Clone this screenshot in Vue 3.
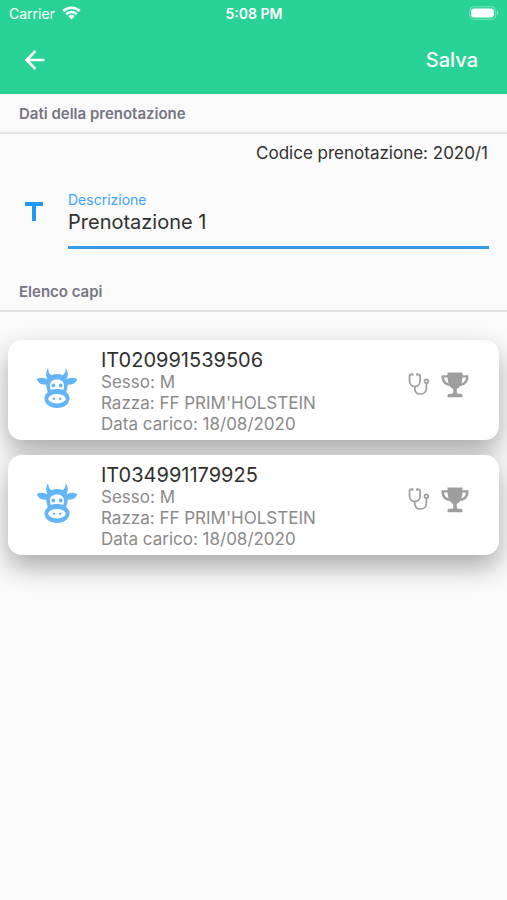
<template>
  <div class="page">
    <header class="app-bar">
      <div class="status-bar">
        <div class="carrier">
          <span>Carrier</span>
          <svg class="wifi" viewBox="0 0 20 15" aria-hidden="true">
            <g fill="none" stroke="#fff" stroke-width="2.8">
              <path d="M1.2 5.4a12.6 12.6 0 0 1 17.6 0" />
              <path d="M4.3 8.8a8.2 8.2 0 0 1 11.4 0" />
            </g>
            <path d="M10 14.5 6.6 11a5 5 0 0 1 6.8 0z" fill="#fff" />
          </svg>
        </div>
        <span class="time">5:08 PM</span>
        <svg class="battery" viewBox="0 0 30 14" aria-hidden="true">
          <rect x=".7" y=".7" width="26" height="12.6" rx="4" fill="none" stroke="#fff" stroke-opacity=".35" />
          <rect x="2.2" y="2.4" width="22.6" height="9.2" rx="2.4" fill="#fff" />
          <path d="M28 5v4c1.7-.6 1.7-3.4 0-4z" fill="#fff" fill-opacity=".5" />
        </svg>
      </div>
      <div class="toolbar">
        <button class="back" type="button" aria-label="Indietro">
          <svg viewBox="0 0 24 24" aria-hidden="true">
            <path d="M21.500 12H4M12.500 3 3.600 12l8.900 9" fill="none" stroke="#fff" stroke-width="2.6" />
          </svg>
        </button>
        <button class="save" type="button">Salva</button>
      </div>
    </header>

    <main>
      <h2 class="section-title">Dati della prenotazione</h2>
      <p class="code">Codice prenotazione: 2020/1</p>
      <div class="field">
        <svg class="field-icon" viewBox="0 0 18 20" aria-hidden="true">
          <path d="M0 0h18v4h-7v15H7V4H0z" fill="#2196f3" />
        </svg>
        <div class="field-body">
          <label for="descrizione">Descrizione</label>
          <input id="descrizione" v-model="descrizione" type="text" />
        </div>
      </div>

      <h2 class="section-title">Elenco capi</h2>
      <ul class="cards">
        <li v-for="capo in capi" :key="capo.matricola" class="card">
          <svg class="cow" viewBox="0 0 42 42" aria-hidden="true">
            <g fill="#64b5f6">
              <path d="M12.2 1c-2.600 4-2.800 9 .3 12l5.500-4.200c-4-.2-5.700-3.200-5.800-7.800z" />
              <path d="M29.800 1c2.600 4 2.800 9-.3 12L24 8.800c4-.2 5.700-3.200 5.800-7.800z" />
              <path d="M.8 12c4-2.200 9.200-1.800 12 1.800l-1 3.400C7 18.500 2.200 17 .8 12z" />
              <path d="M41.200 12c-4-2.200-9.200-1.800-12 1.800l1 3.400c4.800 1.300 9.600-.2 11-5.200z" />
              <path d="M21 7c-7 0-10.800 4-10.800 9.500 0 3.500.8 6 1.700 8.500-2 1.600-3.400 3.700-3.400 6.200C8.500 37 14 41 21 41s12.500-4 12.500-9.800c0-2.500-1.400-4.600-3.400-6.200.9-2.500 1.700-5 1.700-8.500C31.800 11 28 7 21 7z" />
            </g>
            <path d="M21 12.500c-4.600 0-7 2.300-7 6.300 0 1.500.3 2.900.8 4.200 1.800-.8 3.900-1.100 6.200-1.100s4.400.3 6.200 1.100c.5-1.300.8-2.700.8-4.200 0-4-2.400-6.300-7-6.300z" fill="#fff" />
            <ellipse cx="21" cy="31.7" rx="8.8" ry="4.7" fill="#fff" />
            <g fill="#64b5f6">
              <circle cx="17.3" cy="18.5" r="1.9" />
              <circle cx="24.7" cy="18.5" r="1.9" />
              <circle cx="17.8" cy="31.7" r="1.2" />
              <circle cx="24.2" cy="31.7" r="1.2" />
            </g>
          </svg>
          <div class="info">
            <h3>{{ capo.matricola }}</h3>
            <p>Sesso: {{ capo.sesso }}</p>
            <p>Razza: {{ capo.razza }}</p>
            <p>Data carico: {{ capo.dataCarico }}</p>
          </div>
          <svg class="stethoscope" viewBox="0 0 22 24" aria-hidden="true">
            <g fill="none" stroke="#9e9e9e" stroke-width="1.7" stroke-linecap="round">
              <path d="M4.2 2.300h-1C2 2.300 1.500 3 1.500 4v4.500c0 3.800 2.300 6 5.300 6s5.300-2.200 5.300-6V4c0-1-.5-1.700-1.700-1.700h-1" />
              <path d="M6.800 14.500v1.700c0 3.600 2.300 5.800 5.700 5.800s5.900-2.200 5.900-5.800v-5" />
              <circle cx="18.4" cy="9.3" r="1.9" />
            </g>
            <circle cx="4.3" cy="2.5" r="1.2" fill="#9e9e9e" />
            <circle cx="9.3" cy="2.5" r="1.2" fill="#9e9e9e" />
          </svg>
          <svg class="trophy" viewBox="0 0 28 26" aria-hidden="true">
            <path d="M6.500.5h15v2.800h6c.3 6.500-2.600 10.200-8.300 10.700-1 1.300-2 2.200-3.400 2.900v3.300c0 1 .7 1.500 2 1.500h1.500c1.400 0 2.200.8 2.200 2v1.500h-15v-1.500c0-1.200.8-2 2.200-2h1.500c1.300 0 2-.5 2-1.500v-3.300C10.800 16.200 9.800 15.300 8.800 14 3.100 13.500.2 9.800.5 3.300h6z" fill="#9e9e9e" />
            <path d="M3 5.600h3.500c.1 2.300.5 4.200 1.200 5.900C4.700 10.700 3.200 8.700 3 5.600zM25 5.600h-3.500c-.1 2.300-.5 4.200-1.200 5.900 3-.8 4.500-2.800 4.700-5.900z" fill="#fff" />
          </svg>
        </li>
      </ul>
    </main>
  </div>
</template>

<script setup>
import { ref } from 'vue'

const descrizione = ref('Prenotazione 1')

const capi = [
  {
    matricola: 'IT020991539506',
    sesso: 'M',
    razza: "FF PRIM'HOLSTEIN",
    dataCarico: '18/08/2020'
  },
  {
    matricola: 'IT034991179925',
    sesso: 'M',
    razza: "FF PRIM'HOLSTEIN",
    dataCarico: '18/08/2020'
  }
]
</script>

<style>
body {
  margin: 0;
  background: #fafafa;
}
</style>

<style scoped>
.page {
  min-height: 100vh;
  background: #fafafa;
  color: #303030;
  font-family: Inter, "Liberation Sans", sans-serif;
}

h2,
h3,
p,
ul {
  margin: 0;
  padding: 0;
}

svg {
  display: block;
  flex: none;
}

.app-bar {
  background: #29d297;
  color: #fff;
}

.status-bar {
  display: grid;
  grid-template-columns: 1fr auto 1fr;
  align-items: center;
  height: 26px;
  padding: 0 8px 0 9px;
  font-size: 14px;
}

.carrier {
  display: flex;
  align-items: center;
  gap: 7px;
}

.wifi {
  width: 19px;
  height: 14px;
}

.time {
  font-weight: 600;
}

.battery {
  justify-self: end;
  width: 30px;
  height: 14px;
}

.toolbar {
  display: flex;
  align-items: center;
  justify-content: space-between;
  height: 68px;
  box-sizing: border-box;
  padding: 0 29px 0 23px;
}

button {
  padding: 0;
  border: 0;
  background: none;
  color: inherit;
  font-family: inherit;
  cursor: pointer;
}

.back svg {
  width: 24px;
  height: 24px;
}

.save {
  font-size: 20px;
  font-weight: 500;
}

.section-title {
  padding: 2px 19px 0;
  border-bottom: 2px solid #e4e4e5;
  color: #757583;
  font-size: 15px;
  font-weight: 600;
  line-height: 36px;
}

.code {
  padding: 7px 19px 0;
  font-size: 17px;
  line-height: 24px;
  text-align: right;
}

.field {
  display: flex;
  gap: 25px;
  padding: 25px 18px 23px 25px;
}

.field-icon {
  width: 18px;
  height: 20px;
  margin-top: 12px;
}

.field-body {
  display: flex;
  flex: 1;
  flex-direction: column;
  min-width: 0;
}

label {
  color: #42a5f5;
  font-size: 14px;
  line-height: 20px;
}

input {
  width: 100%;
  box-sizing: border-box;
  height: 39px;
  padding: 0 0 12px;
  border: 0;
  border-bottom: 3px solid #3498e4;
  border-radius: 0;
  outline: none;
  background: none;
  color: inherit;
  font-family: inherit;
  font-size: 20px;
}

.cards {
  display: grid;
  gap: 15px;
  padding: 28px 8px;
  list-style: none;
}

.card {
  display: flex;
  min-height: 100px;
  box-sizing: border-box;
  padding: 8px 30px 4px 28px;
  border-radius: 14px;
  background: #fff;
  box-shadow: 0 12px 26px rgba(0, 0, 0, 0.32);
}

.cow {
  width: 42px;
  height: 42px;
  margin-top: 19px;
}

.info {
  flex: 1;
  min-width: 0;
  margin-left: 23px;
  color: #8a8a8a;
  font-size: 17px;
  line-height: 21px;
}

h3 {
  color: #303030;
  font-size: 20px;
  font-weight: 400;
  line-height: 24px;
}

.stethoscope {
  width: 22px;
  height: 24px;
  margin-top: 24px;
}

.trophy {
  width: 28px;
  height: 26px;
  margin: 24px 0 0 11px;
}
</style>
